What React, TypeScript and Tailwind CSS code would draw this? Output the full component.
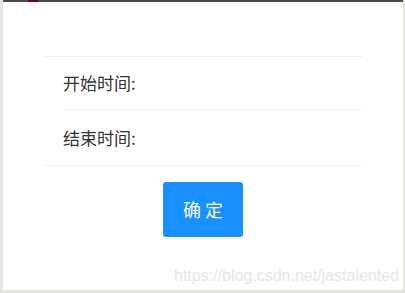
import React from "react";

export default function App() {
  return (
    <div className="relative w-[405px] h-[293px] bg-[#e4e4e0] overflow-hidden" style={{ fontFamily: '"Noto Sans CJK SC", sans-serif' }}>
      <div className="ml-[3px] w-[400px] h-[2px] bg-[#4a4a4a] flex">
        <div className="ml-[25px] w-[10px] h-[2px] bg-[#6a0a0a]" />
      </div>
      <div className="ml-[3px] w-[400px] h-[288px] bg-white pt-[54px]">
        <div className="ml-[40px] w-[320px]">
          <div className="border-t border-[#f2f2f2]" />
          <div className="h-[52px] pl-[20px] flex items-center text-[17px] text-[#333]">开始时间:</div>
          <div className="ml-[20px] border-t border-[#f2f2f2]" />
          <div className="h-[55px] pl-[20px] flex items-center text-[17px] text-[#333]">结束时间:</div>
          <div className="border-t border-[#f2f2f2]" />
          <div className="flex justify-center mt-[16px]">
            <button className="w-[80px] h-[55px] bg-[#1890ff] rounded-[3px] text-white text-[18px] flex items-center justify-center">确 定</button>
          </div>
        </div>
      </div>
      <div className="absolute left-[174px] top-[268px] text-[16px] text-[#e6e6e6] leading-none" style={{ fontFamily: '"Liberation Sans", Arial, sans-serif' }}>
        https://blog.csdn.net/jastalented
      </div>
    </div>
  );
}
